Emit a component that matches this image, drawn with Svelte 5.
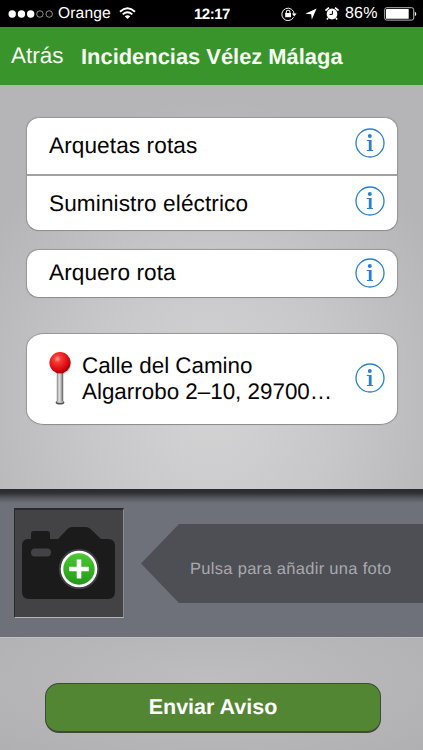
<script>
  const reports = ['Arquetas rotas', 'Suministro eléctrico'];
</script>

{#snippet info()}
  <svg class="info" width="30" height="30" viewBox="0 0 30 30" fill="none">
    <circle cx="15" cy="15" r="14" stroke="#2780d4" stroke-width="1.3" />
    <circle cx="14.8" cy="7.9" r="2" fill="#2780d4" />
    <path d="M11.8 12h4.8v10.100h1.500v1h-6.200v-1h1.900v-9.100h-2z" fill="#2780d4" />
  </svg>
{/snippet}

<main>
  <header class="status">
    <svg class="dots" width="46" height="10" viewBox="0 0 46 10">
      {#each [0, 1, 2, 3, 4] as n}
        <circle cx={4.2 + n * 9.25} cy="5" r={n < 3 ? 3.7 : 3.25} fill={n < 3 ? '#fff' : 'none'} stroke={n < 3 ? 'none' : '#ccc'} stroke-width=".7" />
      {/each}
    </svg>
    <span class="carrier">Orange</span>
    <svg class="wifi" width="17" height="13" viewBox="0 0 17 13" fill="none" stroke="#fff" stroke-width="1.9">
      <path d="M1 4.7Q8.5-2 16 4.7M3.7 7.4Q8.5 3.2 13.3 7.4" />
      <path d="M5.7 9.2Q8.5 7.1 11.3 9.2L8.5 12z" fill="#fff" stroke="none" />
    </svg>
    <span class="clock">12:17</span>
    <svg class="lock" width="16" height="14" viewBox="0 0 16 14" fill="none" stroke="#eee">
      <path d="M12.5 10.3A6.2 6.2 0 1 1 13.2 7" stroke-width="1" />
      <path d="M10.8 6.4h4.8l-2.4 3z" fill="#fff" stroke="none" />
      <path d="M5.3 6.5V5a1.8 1.8 0 0 1 3.6 0v1.5" stroke-width="1.1" />
      <path d="M4.2 6h5.8v4.2H4.2z" fill="#fff" stroke="none" />
    </svg>
    <svg class="arrow" width="12" height="12" viewBox="0 0 12 12"><path d="M11.6.4 6.8 11.6 6.2 6.2.3 5.7z" fill="#fff" /></svg>
    <svg class="alarm" width="14" height="13" viewBox="0 0 14 13">
      <circle cx="7" cy="7" r="5.4" fill="#fff" />
      <path d="M.5 3.5 4 .7M13.5 3.5 10 .7M3 11l-1 1.5M11 11l1 1.5" stroke="#fff" stroke-width="1.7" />
      <path d="M7.4 3.8v3.6H4.5" fill="none" stroke="#000" stroke-width="1" />
    </svg>
    <span class="percent">86%</span>
    <svg class="battery" width="33" height="14" viewBox="0 0 33 14">
      <rect x=".7" y=".7" width="29" height="12.4" rx="2" fill="none" stroke="#ccc" stroke-width=".9" />
      <rect x="2" y="2" width="22.7" height="9.8" rx=".6" fill="#fff" />
      <path d="M30.8 4.5q3 2.4 0 4.8z" fill="#fff" />
    </svg>
  </header>

  <nav>
    <span class="back">Atrás</span>
    <h1>Incidencias Vélez Málaga</h1>
  </nav>

  <section class="form">
    <div class="card group">
      {#each reports as label, i}
        <div class="row" class:second={i === 1}><span>{label}</span>{@render info()}</div>
      {/each}
    </div>
    <div class="card single"><div class="row"><span>Arquero rota</span>{@render info()}</div></div>
    <div class="card place">
      <svg class="pin" width="26" height="56" viewBox="0 0 26 56">
        <defs>
          <radialGradient id="ball" cx=".38" cy=".32" r=".68">
            <stop offset="0" stop-color="#ff9a94" /><stop offset=".25" stop-color="#f43b37" />
            <stop offset=".7" stop-color="#e00d10" /><stop offset="1" stop-color="#a50507" />
          </radialGradient>
          <linearGradient id="metal">
            <stop offset="0" stop-color="#777" /><stop offset=".35" stop-color="#e4e4e4" />
            <stop offset=".65" stop-color="#bbb" /><stop offset="1" stop-color="#555" />
          </linearGradient>
        </defs>
        <ellipse cx="12" cy="51.500" rx="4.3" ry="2" fill="#555" />
        <rect x="8.8" y="20" width="6.4" height="31" fill="url(#metal)" />
        <path d="M8.8 50q3.2 2 6.4 0v1.3q-3.2 1.6-6.4 0z" fill="#ccc" />
        <circle cx="12.8" cy="12.8" r="10.5" fill="#000" opacity=".18" />
        <circle cx="12" cy="11.7" r="10.6" fill="url(#ball)" />
      </svg>
      <p><span class="street">Calle del Camino</span><br /><span class="town">Algarrobo 2–10, 29700…</span></p>
      {@render info()}
    </div>
  </section>

  <section class="photo">
    <div class="thumb">
      <svg width="108" height="108" viewBox="0 0 108 108">
        <defs>
          <linearGradient id="green" x2="0" y2="1"><stop offset="0" stop-color="#4cc934" /><stop offset="1" stop-color="#219a17" /></linearGradient>
        </defs>
        <path d="M13 29h3v-5q0-3 3-3h13q3 0 3 3v5h8L53 18.500q2-1.500 4-1.500h14q2 0 4 1.500L86 29h7q7 0 7 7v46q0 7-7 7H14q-7 0-7-7V36q0-7 6-7z" fill="#1b1b1c" />
        <rect x="16" y="38.500" width="20" height="8" rx="4" fill="#434345" />
        <circle cx="64" cy="59" r="20.300" fill="#3b3b40" />
        <circle cx="64" cy="59" r="18.300" fill="#fff" />
        <circle cx="64" cy="59" r="15.700" fill="url(#green)" />
        <path d="M61.700 49.500h4.600v7.200h7.500v4.600h-7.500v7.200h-4.600v-7.200h-7.500v-4.600h7.500z" fill="#fff" />
      </svg>
    </div>
    <div class="hint"><span>Pulsa para añadir una foto</span></div>
  </section>

  <footer><button>Enviar Aviso</button></footer>
</main>

<style>
  :global(body) { margin: 0; }
  main {
    width: 423px; height: 750px; overflow: hidden; box-sizing: border-box;
    display: flex; flex-direction: column; text-rendering: geometricPrecision;
    font-family: "Liberation Sans", Arial, sans-serif; background: #b5b4b7; color: #050505;
  }
  svg { display: block; flex: none; }
  .status { height: 27px; background: #000; color: #fff; display: flex; align-items: center; flex: none; padding-left: 8px; font-size: 15px; white-space: nowrap; }
  .carrier { margin-left: 4px; width: 56px; font-size: 15.6px; letter-spacing: .15px; padding-top: 1px; }
  .wifi { margin-left: 5px; }
  .clock { margin-left: 58px; width: 40px; font-weight: bold; font-size: 15px; letter-spacing: -.5px; padding-top: 1px; }
  .lock { margin-left: 47px; }
  .arrow { margin-left: 8px; }
  .alarm { margin-left: 8px; }
  .percent { margin-left: 6px; width: 35px; font-size: 16px; letter-spacing: .2px; padding-top: 1px; }
  .battery { margin-left: 4px; }
  nav { height: 58px; background: #39942b; flex: none; display: flex; align-items: center; color: #f7fff4; padding-left: 11px; box-sizing: border-box; white-space: nowrap; }
  .back { width: 70px; font-size: 22.5px; }
  h1 { margin: 0; font-size: 21.9px; line-height: 25px; }
  .form {
    height: 404px; box-sizing: border-box; padding: 31.500px 25px 0 26px; flex: none;
    background: radial-gradient(ellipse 260px 300px at 50% 78%, #d4d4d5 0%, #c7c7c9 50%, #b5b4b7 100%);
  }
  .card { background: #fff; border: 1.500px solid #999; border-bottom-color: #8e8e90; border-radius: 13px; box-sizing: border-box; box-shadow: 0 0 1px #8888; }
  .group { height: 114px; }
  .row { height: 56px; box-sizing: border-box; display: flex; align-items: center; justify-content: space-between; padding: 0 12px 0 22px; font-size: 22.6px; letter-spacing: .1px; }
  .row .info { position: relative; top: -2.500px; }
  .row.second { border-top: 2px solid #a2a2a4; height: 58px; }
  .single { height: 49px; margin-top: 18px; }
  .single .row { height: 47px; }
  .single .row .info { top: -.5px; }
  .place { height: 92px; margin-top: 35px; display: flex; align-items: center; padding: 0 12px 0 21px; border-radius: 18px / 15px; }
  .place .info { position: relative; top: -1px; }
  p { margin: 0 0 0 8px; font-size: 22.4px; line-height: 26px; flex: 1; white-space: nowrap; }
  .photo { height: 148px; box-sizing: border-box; background: linear-gradient(#292a2d 0, #303135 4px, #55575d 9px, #6e7179 14px); flex: none; display: flex; padding: 19px 0 0 14px; }
  .thumb { width: 110px; height: 110px; box-sizing: border-box; background: #434345; border: 1px solid #292a30; border-top-width: 2px; border-bottom-color: #b5b5b9; border-right-color: #898b91; }
  .hint { margin: 16px 0 0 17px; height: 79px; flex: 1; display: flex; align-items: center; background: #4e4f54; clip-path: polygon(38px 0, 100% 0, 100% 100%, 38px 100%, 0 50%); }
  .hint span { padding: 11px 0 0 49px; color: #a9a9ae; font-size: 16.500px; letter-spacing: .3px; white-space: nowrap; }
  footer { flex: 1; padding: 45px 42px 0 45px; background: radial-gradient(ellipse at 50% 40%, #bebdc0, #b0afb2); border-top: 1px solid #c2c1c5; box-sizing: border-box; }
  button { display: block; width: 100%; height: 50px; background: #538632; border: 1.500px solid #40483c; border-bottom-width: 2px; border-radius: 14px; color: #fff; font: bold 21.500px "Liberation Sans", Arial, sans-serif; text-rendering: geometricPrecision; padding: 0; }
</style>
